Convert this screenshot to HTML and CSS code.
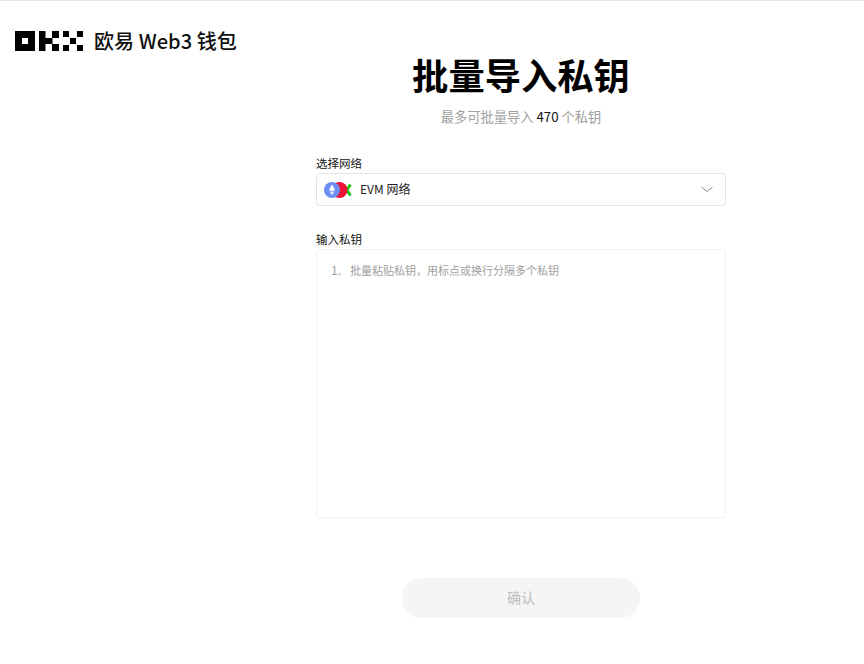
FILE: index.html
```html
<!DOCTYPE html>
<html lang="zh-CN">
<head>
<meta charset="utf-8">
<title>批量导入私钥</title>
<link rel="stylesheet" href="styles.css">
</head>
<body>
<div class="topline"></div>
<header class="brand">
  <svg class="logo" width="68" height="20" viewBox="0 0 68 20" aria-hidden="true">
    <path fill-rule="evenodd" d="M0 0H20V20H0ZM7 7V13H13V7Z"/>
    <path d="M24 0H30.500V7H37V0H44V7H37.500V13H44V20H37V13H30.500V20H24Z"/>
    <path d="M48 0H54V6H48ZM62 0H68V6H62ZM55 7H61V13H55ZM48 14H54V20H48ZM62 14H68V20H62Z"/>
  </svg>
  <span class="brand-name">欧易 Web3 钱包</span>
</header>
<main class="page">
  <h1 class="title">批量导入私钥</h1>
  <p class="subtitle">最多可批量导入 <span class="count">470</span> 个私钥</p>
  <form class="form">
    <label class="label">选择网络</label>
    <div class="select">
      <svg class="net-icon" width="28" height="18" viewBox="0 0 28 18" aria-hidden="true">
        <path d="M19 3.500 L26.500 14.500 M26.500 3.500 L19 14.500" fill="none" stroke="#17c50f" stroke-width="3"/>
        <circle cx="15.500" cy="9" r="8" fill="#ee1238"/>
        <circle cx="8" cy="9" r="8" fill="#6c8ef5"/>
        <path d="M8 3.500 L11 8.800 L8 10.500 L5 8.800 Z M5.200 9.800 L8 11.500 L10.800 9.800 L8 14 Z" fill="#fff"/>
      </svg>
      <span class="select-text">EVM 网络</span>
      <svg class="chevron" width="12" height="7" viewBox="0 0 12 7" aria-hidden="true">
        <path d="M.500 1 L6 5.500 L11.500 1" fill="none" stroke="#8a8a8a" stroke-width="1"/>
      </svg>
    </div>
    <label class="label label-second">输入私钥</label>
    <div class="keys">
      <span class="line-no">1.</span>
      <span class="placeholder">批量粘贴私钥，用标点或换行分隔多个私钥</span>
    </div>
    <div class="actions">
      <button class="confirm" type="button" disabled>确认</button>
    </div>
  </form>
</main>
</body>
</html>
```
FILE: styles.css
```css
* { box-sizing: border-box; }
html, body { margin: 0; padding: 0; }
body {
  width: 864px;
  height: 664px;
  overflow: hidden;
  background: #fff;
  color: #000;
  font-family: "Noto Sans CJK SC", "Noto Sans", sans-serif;
}
.topline { height: 1px; background: #e6ebe0; }
.brand {
  display: flex;
  align-items: center;
  gap: 11px;
  height: 20px;
  margin: 30px 0 0 15px;
}
.logo { display: block; fill: #000; }
.brand-name { font-size: 20.1px; font-weight: 500; line-height: 20px; color: #111; white-space: nowrap; }
.page {
  width: 410px;
  margin: 0 0 0 316px;
  display: flex;
  flex-direction: column;
}
.title {
  margin: 0;
  font-size: 36.3px;
  line-height: 46px;
  font-weight: 700;
  text-align: center;
}
.subtitle {
  margin: 10px 0 0;
  font-size: 13.25px;
  line-height: 20px;
  text-align: center;
  color: #a0a0a0;
}
.count { color: #111; }
.form { display: flex; flex-direction: column; margin-top: 27px; }
.label { font-size: 11.5px; line-height: 18px; color: #111; display: block; }
.label-second { margin-top: 24px; }
.select {
  display: flex;
  align-items: center;
  height: 33px;
  margin-top: 1px;
  padding: 0 12px 0 7px;
  border: 1px solid #e4e4e4;
  border-radius: 4px;
}
.net-icon { display: block; flex: none; }
.select-text { margin: 0 0 2px 8px; font-size: 12px; color: #222; flex: 1; }
.chevron { display: block; }
.keys {
  display: flex;
  align-items: baseline;
  height: 269px;
  margin-top: 1px;
  padding: 11px 14px;
  border: 1px solid #f2f2f2;
  border-radius: 3px;
}
.line-no { font-size: 12px; color: #a0a0a0; width: 19px; flex: none; }
.placeholder { font-size: 11px; color: #a0a0a0; }
.actions { display: flex; justify-content: center; margin-top: 60px; }
.confirm {
  width: 238px;
  height: 40px;
  padding: 0 0 2px;
  border: 0;
  border-radius: 20px;
  background: #f5f5f5;
  color: #bdbdbd;
  font: 400 14px "Noto Sans CJK SC", sans-serif;
}
```
